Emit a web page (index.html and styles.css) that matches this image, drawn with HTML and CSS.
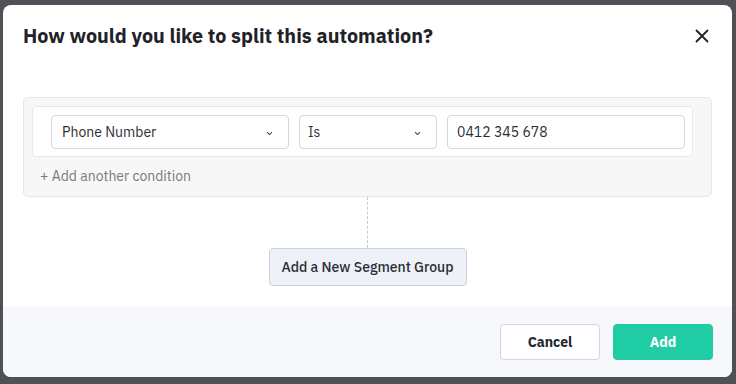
FILE: index.html
```html
<!DOCTYPE html>
<html>
<head>
<meta charset="utf-8">
<link rel="stylesheet" href="styles.css">
</head>
<body>
<div class="overlay">
  <div class="dialog">
    <div class="header">
      <h1 class="title">How would you like to split this automation?</h1>
      <button class="close" aria-label="Close">
        <svg width="14" height="14" viewBox="0 0 14 14"><path d="M1.5 1.5 L12.5 12.5 M12.5 1.5 L1.5 12.5" stroke="#1f2228" stroke-width="1.8" stroke-linecap="round" fill="none"/></svg>
      </button>
    </div>
    <div class="body">
      <div class="group">
        <div class="row">
          <div class="select wide"><span>Phone Number</span><svg class="chev" width="7" height="5" viewBox="0 0 7 5"><path d="M1 1.2 L3.5 3.6 L6 1.2" stroke="#444" stroke-width="1.1" fill="none"/></svg></div>
          <div class="select narrow"><span>Is</span><svg class="chev" width="7" height="5" viewBox="0 0 7 5"><path d="M1 1.2 L3.5 3.6 L6 1.2" stroke="#444" stroke-width="1.1" fill="none"/></svg></div>
          <div class="input wide">0412 345 678</div>
        </div>
        <div class="add-cond">+ Add another condition</div>
      </div>
      <div class="connector"></div>
      <button class="segment-btn">Add a New Segment Group</button>
    </div>
    <div class="footer">
      <button class="btn cancel">Cancel</button>
      <button class="btn add">Add</button>
    </div>
  </div>
</div>
</body>
</html>
```

FILE: styles.css
```css
* { box-sizing: border-box; }
html, body { margin: 0; padding: 0; }
body {
  background: #505157;
  font-family: "IBM Plex Sans", "Noto Sans", "Liberation Sans", sans-serif;
  color: #2b2e35;
}
.overlay {
  width: 736px;
  height: 384px;
  padding: 5px 4px 0 3px;
}
.dialog {
  width: 729px;
  height: 372px;
  background: #fff;
  border-radius: 8px;
  overflow: hidden;
  display: flex;
  flex-direction: column;
}
.header {
  height: 92px;
  padding: 19px 23px 0 20px;
  display: flex;
  justify-content: space-between;
  align-items: flex-start;
}
.title {
  margin: 0;
  font-size: 19.75px;
  line-height: 24px;
  font-weight: 700;
  color: #1f2228;
  letter-spacing: 0;
}
.close {
  border: 0;
  background: none;
  padding: 0;
  margin-top: 5px;
  width: 14px;
  height: 14px;
  display: flex;
}
.body {
  padding: 0 20px;
  display: flex;
  flex-direction: column;
  align-items: center;
}
.group {
  width: 100%;
  height: 100px;
  background: #f7f7f7;
  border: 1px solid #e6e6e6;
  border-radius: 5px;
  padding: 8px 18px 0 8px;
}
.row {
  background: #fff;
  border: 1px solid #e8e8e8;
  border-radius: 4px;
  padding: 8px 7px 7px 18px;
  display: flex;
  gap: 10px;
}
.select, .input {
  height: 34px;
  border: 1px solid #d2d7e2;
  border-radius: 4px;
  background: #fff;
  font-size: 14px;
  color: #2b2e35;
  display: flex;
  align-items: center;
  padding: 0 10px;
}
.select { justify-content: space-between; padding-right: 15px; }
.wide { width: 238px; }
.narrow { width: 138px; padding-left: 8px; }
.input { padding-left: 9px; }
.chev { display: block; margin-top: 2px; }
.add-cond {
  margin-top: 9px;
  padding-left: 8px;
  font-size: 14px;
  line-height: 20px;
  color: #787a80;
}
.connector {
  width: 0;
  height: 51px;
  border-left: 1px dashed #c8c8c8;
}
.segment-btn {
  width: 198px;
  height: 38px;
  background: #eef1f8;
  border: 1px solid #c9cfdc;
  border-radius: 4px;
  font-family: inherit;
  font-size: 14px;
  font-weight: 500;
  color: #2a2e36;
  padding: 0;
}
.footer {
  margin-top: 20px;
  flex: 1;
  background: #f7f8fc;
  display: flex;
  justify-content: flex-end;
  align-items: flex-start;
  gap: 13px;
  padding: 18px 19px 0 0;
}
.btn {
  width: 100px;
  height: 36px;
  border-radius: 4px;
  font-family: inherit;
  font-size: 14px;
  font-weight: 700;
  padding: 0;
}
.cancel {
  background: #fff;
  border: 1px solid #cfd5e2;
  color: #23262d;
}
.add {
  background: #20cca4;
  border: 1px solid #20cca4;
  color: #fff;
}
```
